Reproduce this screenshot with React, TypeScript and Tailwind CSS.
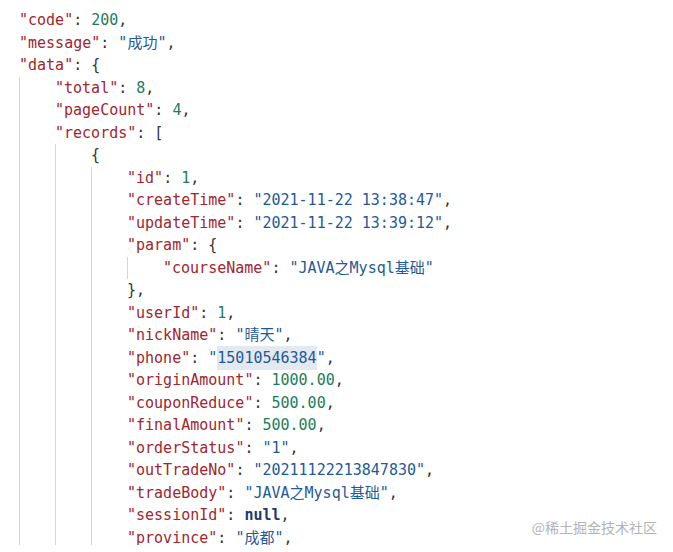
import React from "react";

const Key = ({ k }: { k: string }) => <span className="text-[#a1262f]">"{k}"</span>;
const P = ({ t }: { t: string }) => <span className="text-[#333333]">{t}</span>;
const Str = ({ v, hl }: { v: string; hl?: boolean }) => (
  <span className="text-[#1f5a98]">
    "{hl ? <span className="bg-[#e3e9f0] py-[3px]">{v}</span> : v}"
  </span>
);
const Num = ({ v }: { v: string }) => <span className="text-[#1c7d5a]">{v}</span>;

const Line = ({ children }: { children: React.ReactNode }) => (
  <div className="h-[22.5px] leading-[22.5px] whitespace-pre">{children}</div>
);

const Block = ({ children }: { children: React.ReactNode }) => (
  <div className="border-l border-[#d6d6d6] pl-[35px]">{children}</div>
);

const Field = ({ k, children }: { k: string; children: React.ReactNode }) => (
  <Line>
    <Key k={k} />
    <P t=": " />
    {children}
    <P t="," />
  </Line>
);

const App = () => {
  return (
    <main className="relative w-[673px] h-[552px] bg-white overflow-hidden">
      <div
        className="h-[545px] overflow-hidden pt-[9px] pl-[19px] text-[15px]"
        style={{ fontFamily: '"DejaVu Sans Mono", "Noto Sans CJK SC", monospace' }}
      >
        <Field k="code"><Num v="200" /></Field>
        <Field k="message"><Str v="成功" /></Field>
        <Line>
          <Key k="data" />
          <P t=": {" />
        </Line>
        <Block>
          <Field k="total"><Num v="8" /></Field>
          <Field k="pageCount"><Num v="4" /></Field>
          <Line>
            <Key k="records" />
            <P t=": [" />
          </Line>
          <Block>
            <Line><P t="{" /></Line>
            <Block>
              <Field k="id"><Num v="1" /></Field>
              <Field k="createTime"><Str v="2021-11-22 13:38:47" /></Field>
              <Field k="updateTime"><Str v="2021-11-22 13:39:12" /></Field>
              <Line>
                <Key k="param" />
                <P t=": {" />
              </Line>
              <Block>
                <Line>
                  <Key k="courseName" />
                  <P t=": " />
                  <Str v="JAVA之Mysql基础" />
                </Line>
              </Block>
              <Line><P t="}," /></Line>
              <Field k="userId"><Num v="1" /></Field>
              <Field k="nickName"><Str v="晴天" /></Field>
              <Field k="phone"><Str v="15010546384" hl /></Field>
              <Field k="originAmount"><Num v="1000.00" /></Field>
              <Field k="couponReduce"><Num v="500.00" /></Field>
              <Field k="finalAmount"><Num v="500.00" /></Field>
              <Field k="orderStatus"><Str v="1" /></Field>
              <Field k="outTradeNo"><Str v="20211122213847830" /></Field>
              <Field k="tradeBody"><Str v="JAVA之Mysql基础" /></Field>
              <Field k="sessionId"><span className="font-bold text-[#1d3b6e]">null</span></Field>
              <Field k="province"><Str v="成都" /></Field>
            </Block>
          </Block>
        </Block>
      </div>
      <div
        className="absolute right-[16px] top-[517px] text-[14px] leading-[20px] text-[#b4b4b4]"
        style={{ fontFamily: '"Noto Sans CJK SC", sans-serif' }}
      >
        @稀土掘金技术社区
      </div>
    </main>
  );
};

export default App;
